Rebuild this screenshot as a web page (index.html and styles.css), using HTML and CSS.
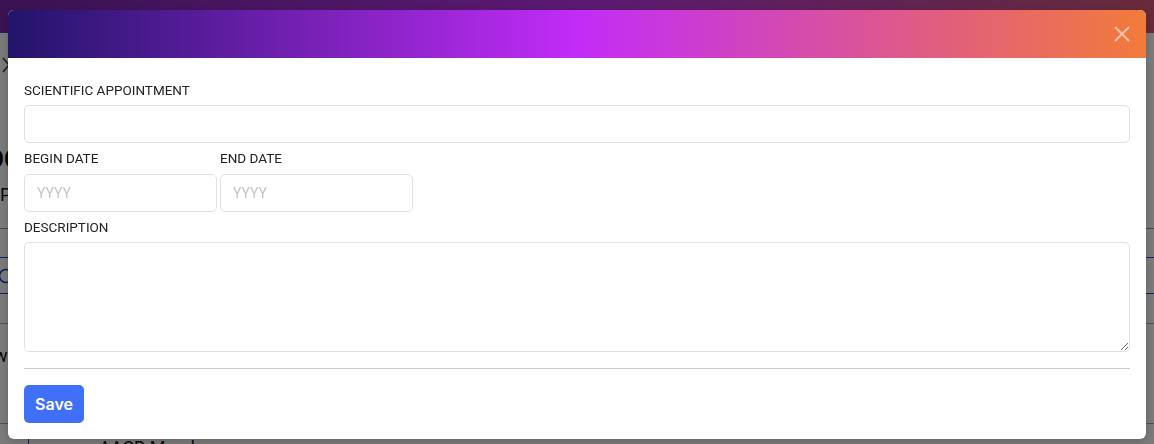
FILE: index.html
```html
<!DOCTYPE html>
<html lang="en">
<head>
<meta charset="utf-8">
<title>Scientific appointment</title>
<link rel="stylesheet" href="styles.css">
</head>
<body>
<div class="page">
  <div class="page-header"></div>
  <div class="page-body">
    <svg class="back-icon" width="12" height="16" viewBox="0 0 12 16"><polyline points="3,1 9,8 3,15" fill="none" stroke="#333" stroke-width="1.5"/></svg>
    <div class="page-title">OC</div>
    <div class="page-sub">P</div>
    <div class="rule"></div>
    <div class="tab-row">
      <svg class="tab-icon" width="16" height="16" viewBox="0 0 16 16"><circle cx="8" cy="8" r="6.5" fill="none" stroke="#1d3fbf" stroke-width="1.5"/></svg>
    </div>
    <div class="rule gray"></div>
    <div class="page-w">w</div>
    <div class="rule gray low"></div>
    <div class="member-row"><span class="member-bar"></span><span class="member">AACB Member</span></div>
  </div>
</div>

<div class="overlay">
  <div class="modal">
    <div class="modal-header">
      <button class="close" type="button" aria-label="Close">
        <svg width="16" height="16" viewBox="0 0 16 16"><path d="M1 1L15 15M15 1L1 15" stroke="rgba(255,255,255,0.55)" stroke-width="2" fill="none"/></svg>
      </button>
    </div>
    <form class="modal-body">
      <label class="label">SCIENTIFIC APPOINTMENT</label>
      <input class="field" type="text">
      <div class="date-row">
        <div class="date-col">
          <label class="label">BEGIN DATE</label>
          <input class="field" type="text" placeholder="YYYY">
        </div>
        <div class="date-col">
          <label class="label">END DATE</label>
          <input class="field" type="text" placeholder="YYYY">
        </div>
      </div>
      <label class="label">DESCRIPTION</label>
      <textarea class="field area"></textarea>
      <hr class="divider">
      <div class="actions"><button class="save" type="button">Save</button></div>
    </form>
  </div>
</div>
</body>
</html>
```

FILE: styles.css
```css
* { box-sizing: border-box; }
html, body { margin: 0; padding: 0; }
body {
  width: 1154px;
  height: 444px;
  overflow: hidden;
  font-family: Roboto, "Liberation Sans", Arial, sans-serif;
  background: #fff;
  color: #222;
}

/* background page */
.page { width: 1154px; height: 444px; }
.page-header {
  height: 33px;
  background: linear-gradient(to right, #7a26ac, #bd36ef 50%, #d85a78);
}
.page-body { display: flex; flex-direction: column; }
.back-icon { margin: 24px 0 0 0; display: block; }
.page-title {
  margin: 72px 0 0 -14px;
  font-size: 26px;
  font-weight: 700;
  line-height: 28px;
  color: #111;
}
.page-sub {
  margin: 12px 0 0 0;
  font-size: 18px;
  line-height: 20px;
  color: #111;
}
.rule { height: 1px; background: #999; margin-top: 23px; }
.tab-row {
  margin-top: 28px;
  height: 37px;
  border-top: 1px solid #2446c8;
  border-bottom: 1px solid #2446c8;
  display: flex;
  align-items: center;
}
.tab-icon { margin-left: -2px; }
.rule.gray { margin-top: 29px; background: #aaa; }
.page-w { margin: 22px 0 0 -6px; font-size: 18px; line-height: 20px; color: #111; }
.rule.low { margin-top: 57px; }
.member-row { display: flex; align-items: flex-start; margin-top: 9px; }
.member-bar { width: 1px; height: 20px; background: #2446c8; margin-left: 28px; }
.member { margin: 5px 0 0 70px; font-size: 18px; line-height: 20px; color: #111; }

/* overlay + modal */
.overlay {
  position: fixed;
  inset: 0;
  background: rgba(0, 0, 0, 0.52);
  padding: 10px 8px 0 8px;
}
.modal {
  width: 1138px;
  background: #fff;
  border-radius: 6px;
  overflow: hidden;
  box-shadow: 0 2px 8px rgba(0, 0, 0, 0.2);
}
.modal-header {
  height: 48px;
  background: linear-gradient(to right, #22146a 0%, #c22cf8 50%, #f27b3a 100%);
  display: flex;
  justify-content: flex-end;
  align-items: center;
  padding-right: 16px;
}
.close {
  width: 16px;
  height: 16px;
  padding: 0;
  border: 0;
  background: none;
  display: block;
  cursor: pointer;
}
.close svg { display: block; }

.modal-body {
  padding: 22px 16px 16px 16px;
  display: flex;
  flex-direction: column;
}
.label {
  display: block;
  font-size: 13.5px;
  line-height: 20px;
  color: #222;
  margin-bottom: 5px;
  height: 20px;
}
.field {
  display: block;
  width: 100%;
  height: 38px;
  border: 1px solid #dfdfe6;
  border-radius: 5px;
  padding: 0 12px;
  font-family: inherit;
  font-size: 14px;
  color: #222;
  background: #fff;
  margin-bottom: 5px;
  outline: none;
}
.field::placeholder { color: #c4c4c8; }
.date-row { display: flex; gap: 3px; }
.date-col { width: 193px; display: flex; flex-direction: column; }
.date-col .label { margin-bottom: 6px; }
.area {
  height: 110px;
  padding: 8px 12px;
  resize: vertical;
  margin-bottom: 0;
  border-color: #e0e0e0;
}
.divider {
  border: 0;
  height: 1px;
  background: #cccccc;
  margin: 16px 0 16px 0;
}
.actions { display: flex; }
.save {
  width: 60px;
  height: 38px;
  border: 0;
  border-radius: 5px;
  background: #4170f8;
  color: #fff;
  font-family: Inter, Roboto, "Liberation Sans", sans-serif;
  font-size: 16px;
  font-weight: 600;
  cursor: pointer;
}
```
